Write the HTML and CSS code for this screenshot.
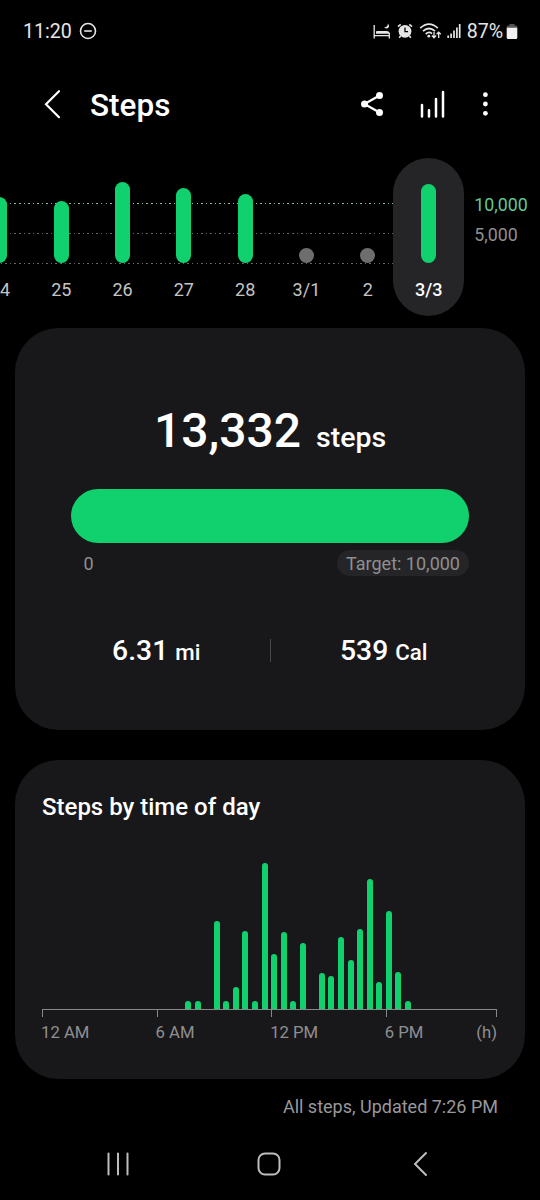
FILE: index.html
```html
<!DOCTYPE html>
<html lang="en">
<head>
    <meta charset="UTF-8">
    <meta name="viewport" content="width=device-width, initial-scale=1.0">
    <title>Steps</title>
    <link rel="stylesheet" href="styles.css">
</head>
<body>
    <div class="status-bar">
        <span class="status-time">11:20</span>
        <svg class="status-dnd" width="18" height="18" viewBox="0 0 18 18">
            <circle cx="9" cy="9" r="7.5"/>
            <path d="M5.2 9h7.6"/>
        </svg>
        <div class="status-icons">
            <!-- Bedtime mode -->
            <svg width="18" height="16" viewBox="0 0 18 16">
                <path d="M1.2 2v13.5M16.3 10v5.5M1.2 12.7h15.1" fill="none" stroke="#e6e6e6" stroke-width="1.3"/>
                <path d="M3 10.8V9Q3 8 4 8H13.5Q16.5 8 16.8 10.8Z" fill="#e6e6e6"/>
                <path d="M14.6 .4q1 3.2-3.6 4 3.6 2.4 5-.6.5-1.9-1.4-3.4z" fill="#e6e6e6"/>
            </svg>
            <!-- Alarm -->
            <svg width="16" height="16" viewBox="0 0 16 16">
                <circle cx="8" cy="8.3" r="6.4" fill="#e6e6e6"/>
                <path d="M1 3.6 3.7 1.3M15 3.6 12.3 1.3M3.7 12.8 2.2 14.7M12.3 12.8l1.5 1.9" fill="none" stroke="#e6e6e6" stroke-width="1.6"/>
                <path d="M8 4.6v4.1h3" fill="none" stroke="#000" stroke-width="1.3"/>
            </svg>
            <!-- Wi-Fi with traffic arrows -->
            <svg width="22" height="16" viewBox="0 0 22 16">
                <path d="M1.2 5.2Q10 -2.8 18.8 5.2M4 8.2Q10 2.8 16 8.2M6.7 11Q10 8.2 13 10.6" fill="none" stroke="#e6e6e6" stroke-width="1.7"/>
                <circle cx="9.8" cy="13.2" r="1.4" fill="#e6e6e6"/>
                <path d="M15 9v5.5M12.9 12.5l2.1 2.2 2.1-2.2M19.7 15V9.3M17.6 11.3l2.1-2.2 2.1 2.2" fill="none" stroke="#e6e6e6" stroke-width="1.3"/>
            </svg>
            <svg width="14" height="16" viewBox="0 0 14 16">
                <path d="M1.2 15v-2.5M4.1 15v-4.5M7 15V7.5M9.9 15V4.5M12.7 15V1" fill="none" stroke="#e6e6e6" stroke-width="1.7"/>
            </svg>
            <span class="status-battery">87%</span>
            <svg width="12" height="17" viewBox="0 0 12 17">
                <path d="M3.5 1h5v1.5H10Q11.3 2.5 11.3 4v1H.7V4Q.7 2.5 2 2.5h1.5z" fill="#555"/>
                <path d="M.7 4.7h10.6V14.5Q11.3 16 9.8 16H2.2Q.7 16 .7 14.5z" fill="#f0f0f0"/>
            </svg>
        </div>
    </div>

    <header class="app-bar">
        <svg class="back-icon" width="18" height="30" viewBox="0 0 18 30">
            <path d="M15 2.2 2 15.2 15 28.2"/>
        </svg>
        <h1>Steps</h1>
        <div class="app-actions">
            <svg width="24" height="26" viewBox="0 0 24 26">
                <path d="M19.5 4.5 4.5 13 19.5 21.5" fill="none" stroke="#fff" stroke-width="2.2"/>
                <circle cx="19.5" cy="4.5" r="3.5" fill="#fff"/>
                <circle cx="4.5" cy="13" r="3.5" fill="#fff"/>
                <circle cx="19.5" cy="21.5" r="3.5" fill="#fff"/>
            </svg>
            <svg width="26" height="28" viewBox="0 0 26 28">
                <path d="M2 15v11.5M9 20.3v6.2M16 9v17.5M23 2v24.5" fill="none" stroke="#fff" stroke-width="2.5" stroke-linecap="round"/>
            </svg>
            <svg width="6" height="24" viewBox="0 0 6 24">
                <circle cx="3.4" cy="2.7" r="2.4" fill="#fff"/>
                <circle cx="3.4" cy="12" r="2.4" fill="#fff"/>
                <circle cx="3.4" cy="21.3" r="2.4" fill="#fff"/>
            </svg>
        </div>
    </header>

    <section class="trend">
        <div class="trend-days" id="trend-days"></div>
        <div class="trend-scale">
            <span class="scale-target">10,000</span>
            <span>5,000</span>
        </div>
    </section>

    <section class="card summary">
        <div class="summary-count">13,332 <span>steps</span></div>
        <div class="progress"></div>
        <div class="progress-labels">
            <span class="progress-start">0</span>
            <span class="progress-target">Target: 10,000</span>
        </div>
        <div class="summary-stats">
            <div class="stat">6.31 <span>mi</span></div>
            <div class="stat-divider"></div>
            <div class="stat">539 <span>Cal</span></div>
        </div>
    </section>

    <section class="card hourly">
        <h2>Steps by time of day</h2>
        <div class="hourly-bars" id="hourly-bars"></div>
        <div class="hourly-axis">
            <i></i><i></i><i></i><i></i>
        </div>
        <div class="hourly-labels">
            <span>12 AM</span>
            <span>6 AM</span>
            <span>12 PM</span>
            <span>6 PM</span>
            <span>(h)</span>
        </div>
    </section>

    <p class="updated">All steps, Updated 7:26 PM</p>

    <nav class="nav-bar">
        <svg width="24" height="26" viewBox="0 0 24 26">
            <path d="M2.5 2.5v21M12 2.5v21M21.5 2.5v21"/>
        </svg>
        <svg class="home-icon" width="26" height="26" viewBox="0 0 26 26">
            <rect x="2.5" y="2.5" width="21" height="21" rx="6.5"/>
        </svg>
        <svg width="16" height="26" viewBox="0 0 16 26">
            <path d="M14 2 3 13 14 24"/>
        </svg>
    </nav>

    <script>
        // Bar height in px for each day, null means nothing recorded
        const days = [
            { label: '24', height: 66 },
            { label: '25', height: 62 },
            { label: '26', height: 81 },
            { label: '27', height: 75.5 },
            { label: '28', height: 69.5 },
            { label: '3/1', height: null },
            { label: '2', height: null },
            { label: '3/3', height: 79.5, selected: true }
        ];

        document.getElementById('trend-days').innerHTML = days.map(day => {
            const bar = day.height === null
                ? '<div class="day-bar empty"></div>'
                : `<div class="day-bar" style="height: ${day.height}px"></div>`;
            return `<div class="day${day.selected ? ' selected' : ''}">${bar}<span>${day.label}</span></div>`;
        }).join('');

        // Half-hour slots starting at midnight
        const slots = [
            0, 0, 0, 0, 0, 0, 0, 0, 0, 0, 0, 0,
            0, 0, 0, 8, 8, 0, 88, 8, 22.5, 78, 8, 146,
            55, 77.5, 8, 66, 0, 36, 33, 72, 49, 80, 130, 27.5,
            98, 37, 8, 0, 0, 0, 0, 0, 0, 0, 0, 0
        ];

        document.getElementById('hourly-bars').innerHTML = slots
            .map(height => `<span style="height: ${height}px"></span>`)
            .join('');
    </script>
</body>
</html>
```
FILE: styles.css
```css
* {
    box-sizing: border-box;
}
body {
    font-family: Roboto, sans-serif;
    margin: 0;
    width: 540px;
    height: 1200px;
    overflow: hidden;
    background-color: #000;
    color: #fff;
}
svg {
    display: block;
    flex-shrink: 0;
}
h1, h2, p {
    margin: 0;
    font-weight: 500;
}

/* Status bar */
.status-bar {
    display: flex;
    align-items: center;
    height: 62px;
    padding: 0 22px 0 23px;
    font-size: 19.6px;
    color: #e6e6e6;
}
.status-dnd {
    margin-left: 7px;
    fill: none;
    stroke: #e6e6e6;
    stroke-width: 1.6;
}
.status-icons {
    display: flex;
    align-items: center;
    gap: 6px;
    margin-left: auto;
}
.status-battery {
    margin: 0 -3px 0 0;
}

/* App bar */
.app-bar {
    display: flex;
    align-items: center;
    height: 84px;
    padding: 0 52px 0 44px;
}
.back-icon {
    fill: none;
    stroke: #fff;
    stroke-width: 2.2;
    stroke-linecap: round;
}
.app-bar h1 {
    margin-left: 28px;
    padding-top: 2px;
    font-size: 31.5px;
}
.app-actions {
    display: flex;
    align-items: center;
    gap: 36px;
    margin-left: auto;
}

/* Daily trend */
.trend {
    display: flex;
    height: 170px;
    margin-top: 12px;
    overflow: hidden;
}
.trend-days {
    display: flex;
    flex-shrink: 0;
    height: 158px;
    margin-left: -30.7px;
    background-image:
        repeating-linear-gradient(90deg, #8fb8a3 0 1.5px, transparent 1.5px 4.55px),
        repeating-linear-gradient(90deg, #666 0 1.5px, transparent 1.5px 4.55px),
        repeating-linear-gradient(90deg, #666 0 1.5px, transparent 1.5px 4.55px);
    background-size: 425px 1px;
    background-position: 0 45px, 0 75px, 0 105px;
    background-repeat: no-repeat;
}
.day {
    display: flex;
    flex-direction: column;
    align-items: center;
    justify-content: flex-end;
    width: 61.3px;
    padding-bottom: 15px;
    font-size: 18px;
    line-height: 22px;
    color: #c4c4c4;
}
.day-bar {
    width: 15px;
    margin-bottom: 16px;
    border-radius: 8px;
    background-color: #11d16f;
}
.day-bar.empty {
    height: 15px;
    background-color: #6e6e6e;
}
.day.selected {
    width: 71px;
    margin-left: -5.1px;
    border-radius: 36px;
    background-color: #252527;
    color: #fff;
    font-weight: 500;
}
.trend-scale {
    display: flex;
    flex-direction: column;
    gap: 8px;
    padding: 36px 0 0 10px;
    font-size: 17.8px;
    line-height: 22px;
    color: #8f8f8f;
}
.scale-target {
    color: #62ca91;
}

/* Cards */
.card {
    width: 510px;
    margin: 0 auto;
    border-radius: 44px;
    background-color: #18181a;
}
.summary {
    height: 402px;
    padding: 72px 56px 0;
}
.summary-count {
    height: 62px;
    font-size: 48px;
    font-weight: 500;
    line-height: 62px;
    text-align: center;
}
.summary-count span {
    margin-left: 3px;
    font-size: 28.5px;
}
.progress {
    height: 54px;
    margin-top: 27px;
    border-radius: 27px;
    background-color: #11d16f;
}
.progress-labels {
    display: flex;
    justify-content: space-between;
    margin-top: 7px;
    padding-left: 12.5px;
    font-size: 18px;
    line-height: 27px;
    color: #8f8f91;
}
.progress-target {
    height: 26px;
    padding: 0 9px;
    border-radius: 13px;
    background-color: #252527;
}
.summary-stats {
    display: flex;
    align-items: center;
    margin: 53px -28px 0;
}
.stat {
    flex: 1;
    height: 40px;
    font-size: 28.3px;
    font-weight: 500;
    line-height: 42px;
    text-align: center;
}
.stat span {
    font-size: 22.3px;
}
.stat-divider {
    width: 1px;
    height: 23px;
    background-color: #48484a;
}

/* Steps by time of day */
.hourly {
    height: 319px;
    margin-top: 30px;
    padding: 32px 28px 0 27px;
}
.hourly h2 {
    font-size: 24px;
    line-height: 30px;
}
.hourly-bars {
    display: grid;
    grid-template-columns: repeat(48, 9.55px);
    align-items: end;
    height: 148px;
    margin-top: 39px;
}
.hourly-bars span {
    width: 6px;
    border-radius: 3px 3px 0 0;
    background-color: #11d16f;
}
.hourly-axis {
    display: grid;
    grid-template-columns: repeat(3, 114.6px) 1fr;
    height: 8px;
    border-top: 1px solid #88888a;
    border-right: 1px solid #88888a;
}
.hourly-axis i {
    border-left: 1px solid #88888a;
}
.hourly-labels {
    display: grid;
    grid-template-columns: repeat(3, 114.6px) 1fr auto;
    margin-left: -1px;
    margin-top: 4px;
    font-size: 16.7px;
    line-height: 23px;
    color: #8f8f91;
}

.updated {
    margin-top: 17px;
    padding-right: 42px;
    font-size: 18px;
    font-weight: 400;
    line-height: 22px;
    text-align: right;
    color: #98989a;
}

/* System navigation */
.nav-bar {
    display: flex;
    align-items: center;
    justify-content: space-between;
    margin-top: 33px;
    padding: 0 112px 0 106px;
    fill: none;
    stroke: #bdbdbd;
    stroke-width: 2;
    stroke-linecap: round;
}
.home-icon {
    margin-right: 5px;
}
```
